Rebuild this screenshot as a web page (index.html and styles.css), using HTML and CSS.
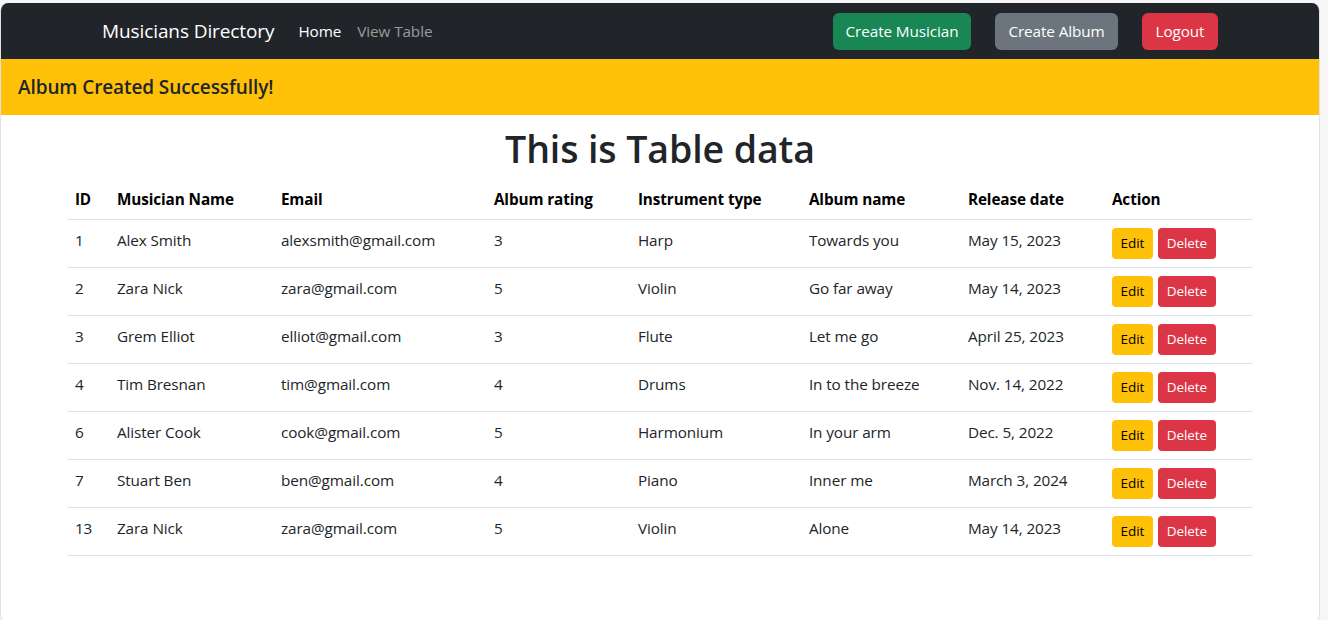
FILE: index.html
```html
<!DOCTYPE html>
<html lang="en">
<head>
<meta charset="utf-8">
<title>Musicians Directory</title>
<link rel="stylesheet" href="styles.css">
</head>
<body>
<div class="window">
  <nav class="navbar">
    <div class="nav-container">
      <a class="brand" href="#">Musicians Directory</a>
      <ul class="nav-links">
        <li><a class="nav-link active" href="#">Home</a></li>
        <li><a class="nav-link" href="#">View Table</a></li>
      </ul>
      <div class="nav-actions">
        <a class="btn btn-success" href="#">Create Musician</a>
        <a class="btn btn-secondary" href="#">Create Album</a>
        <a class="btn btn-danger" href="#">Logout</a>
      </div>
    </div>
  </nav>
  <div class="alert">Album Created Successfully!</div>
  <h1 class="title">This is Table data</h1>
  <div class="table-wrap">
    <table class="table">
      <colgroup>
        <col class="c-id"><col class="c-name"><col class="c-email"><col class="c-rating">
        <col class="c-inst"><col class="c-album"><col class="c-date"><col class="c-action">
      </colgroup>
      <thead>
        <tr><th>ID</th><th>Musician Name</th><th>Email</th><th>Album rating</th><th>Instrument type</th><th>Album name</th><th>Release date</th><th>Action</th></tr>
      </thead>
      <tbody>
        <tr><td>1</td><td>Alex Smith</td><td>alexsmith@gmail.com</td><td>3</td><td>Harp</td><td>Towards you</td><td>May 15, 2023</td><td><div class="actions"><a class="btn-sm btn-warning" href="#">Edit</a><a class="btn-sm btn-danger" href="#">Delete</a></div></td></tr>
        <tr><td>2</td><td>Zara Nick</td><td>zara@gmail.com</td><td>5</td><td>Violin</td><td>Go far away</td><td>May 14, 2023</td><td><div class="actions"><a class="btn-sm btn-warning" href="#">Edit</a><a class="btn-sm btn-danger" href="#">Delete</a></div></td></tr>
        <tr><td>3</td><td>Grem Elliot</td><td>elliot@gmail.com</td><td>3</td><td>Flute</td><td>Let me go</td><td>April 25, 2023</td><td><div class="actions"><a class="btn-sm btn-warning" href="#">Edit</a><a class="btn-sm btn-danger" href="#">Delete</a></div></td></tr>
        <tr><td>4</td><td>Tim Bresnan</td><td>tim@gmail.com</td><td>4</td><td>Drums</td><td>In to the breeze</td><td>Nov. 14, 2022</td><td><div class="actions"><a class="btn-sm btn-warning" href="#">Edit</a><a class="btn-sm btn-danger" href="#">Delete</a></div></td></tr>
        <tr><td>6</td><td>Alister Cook</td><td>cook@gmail.com</td><td>5</td><td>Harmonium</td><td>In your arm</td><td>Dec. 5, 2022</td><td><div class="actions"><a class="btn-sm btn-warning" href="#">Edit</a><a class="btn-sm btn-danger" href="#">Delete</a></div></td></tr>
        <tr><td>7</td><td>Stuart Ben</td><td>ben@gmail.com</td><td>4</td><td>Piano</td><td>Inner me</td><td>March 3, 2024</td><td><div class="actions"><a class="btn-sm btn-warning" href="#">Edit</a><a class="btn-sm btn-danger" href="#">Delete</a></div></td></tr>
        <tr><td>13</td><td>Zara Nick</td><td>zara@gmail.com</td><td>5</td><td>Violin</td><td>Alone</td><td>May 14, 2023</td><td><div class="actions"><a class="btn-sm btn-warning" href="#">Edit</a><a class="btn-sm btn-danger" href="#">Delete</a></div></td></tr>
      </tbody>
    </table>
  </div>
</div>
</body>
</html>
```

FILE: styles.css
```css
* { box-sizing: border-box; }
html, body { margin: 0; padding: 0; }
body {
  background: #f6f6f6;
  font-family: "Open Sans", "Noto Sans", sans-serif;
  font-size: 15.3px;
  line-height: 24px;
  color: #212529;
  letter-spacing: -0.1px;
}
a { text-decoration: none; }
.window {
  margin: 3px 8px 0 0;
  height: 620px;
  background: #fff;
  border: 1px solid #e2e2e2;
  border-top: none;
  border-radius: 8px;
  overflow: hidden;
}
.navbar {
  background: #212529;
  height: 56px;
  display: flex;
  align-items: center;
}
.nav-container {
  width: 1140px;
  margin: 0 auto;
  padding: 0 12px;
  display: flex;
  align-items: center;
}
.brand {
  color: #fff;
  font-size: 19px;
  line-height: 30px;
  margin-right: 16px;
}
.nav-links {
  list-style: none;
  margin: 0;
  padding: 0;
  display: flex;
}
.nav-link {
  display: block;
  padding: 8px 8px;
  color: rgba(255,255,255,0.55);
}
.nav-link.active { color: #fff; }
.nav-actions {
  margin-left: auto;
  display: flex;
  gap: 24px;
}
.btn {
  display: inline-block;
  height: 37px;
  line-height: 23px;
  padding: 6px 0;
  border: 1px solid transparent;
  border-radius: 6px;
  color: #fff;
  text-align: center;
  font-size: 15.3px;
}
.btn-success { background: #198754; width: 138px; }
.btn-secondary { background: #6c757d; width: 123px; }
.btn-danger { background: #dc3545; color: #fff; }
.nav-actions .btn-danger { width: 76px; }
.alert {
  background: #ffc107;
  height: 56px;
  padding: 0 17px;
  display: flex;
  align-items: center;
  font-size: 19px;
  font-weight: 600;
  color: #212529;
}
.title {
  margin: 10px 0 6px;
  text-align: center;
  font-size: 37.5px;
  line-height: 48px;
  font-weight: 600;
  color: #212529;
}
.table-wrap {
  width: 90%;
  margin: 0 auto;
}
.table {
  width: 100%;
  border-collapse: collapse;
  table-layout: fixed;
}
.c-id { width: 42px; }
.c-name { width: 164px; }
.c-email { width: 213px; }
.c-rating { width: 144px; }
.c-inst { width: 171px; }
.c-album { width: 159px; }
.c-date { width: 144px; }
.table th, .table td {
  text-align: left;
  vertical-align: top;
  padding: 8px;
  border-bottom: 1px solid #dee2e6;
  white-space: nowrap;
}
.table th {
  font-weight: 700;
  color: #000;
}
.actions {
  display: flex;
  gap: 5px;
}
.btn-sm {
  display: block;
  height: 31px;
  padding: 4px 0;
  font-size: 13.5px;
  line-height: 21px;
  border-radius: 4px;
  border: 1px solid transparent;
  text-align: center;
}
.btn-warning { background: #ffc107; color: #000; width: 41px; }
.actions .btn-danger { width: 58px; }
```
